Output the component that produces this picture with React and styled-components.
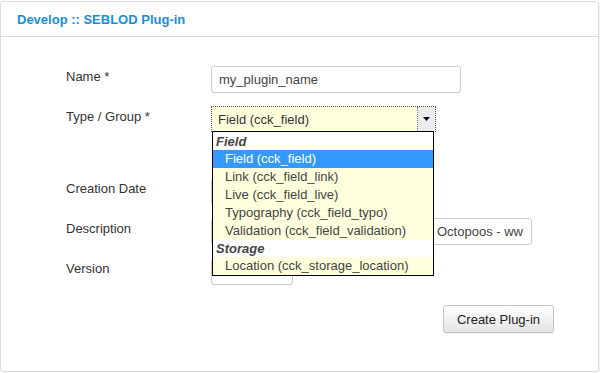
import React from 'react'
import styled, { createGlobalStyle } from 'styled-components'

const GlobalStyle = createGlobalStyle`
  html, body { margin: 0; padding: 0; background: #fff; }
  body { font-family: 'Liberation Sans', Arial, sans-serif; font-size: 13px; color: #333; }
`

const Panel = styled.div`
  margin: 1px 1px 0 0;
  width: 597px;
  height: 369px;
  border: 1px solid #dcdcdc;
  border-radius: 3px;
  box-shadow: 1px 1px 1px #f0f0f0;
  background: #fff;
  display: flex;
  flex-direction: column;
`

const Header = styled.div`
  height: 34px;
  border-bottom: 1px solid #dcdcdc;
  padding-left: 16px;
  display: flex;
  align-items: center;
  font-size: 13px;
  font-weight: bold;
  color: #1b8dd3;
`

const Form = styled.div`
  padding: 29px 0 0 65px;
  display: flex;
  flex-direction: column;
`

const Row = styled.div`
  display: grid;
  grid-template-columns: 145px auto;
  height: ${p => (p.$tall ? 72 : 40)}px;
  align-items: start;
`

const Label = styled.div`
  height: 26px;
  line-height: 22px;
  font-size: 13px;
  color: #333;
`

const Control = styled.div`
  position: relative;
`

const Input = styled.div`
  box-sizing: border-box;
  width: ${p => p.$w}px;
  height: 27px;
  border: 1px solid #ccc;
  border-radius: 3px;
  padding-left: ${p => p.$indent || 7}px;
  display: flex;
  align-items: center;
  white-space: nowrap;
  overflow: hidden;
  color: #444;
`

const Select = styled.div`
  box-sizing: border-box;
  width: 225px;
  height: 26px;
  border: 1px dotted #555;
  background: #ffffdd;
  display: flex;
  align-items: center;
`

const SelectValue = styled.div`
  flex: 1;
  padding-left: 6px;
  color: #333;
`

const SelectArrow = styled.div`
  width: 17px;
  height: 24px;
  border-left: 1px dotted #777;
  background: #ececec;
  display: flex;
  align-items: center;
  justify-content: center;
`

const Listbox = styled.div`
  position: absolute;
  top: 25px;
  left: 1px;
  width: 222px;
  box-sizing: border-box;
  border: 1px solid #000;
  background: #fff;
  z-index: 2;
  padding: 1px 0 0;
`

const Group = styled.div`
  height: 17px;
  line-height: 17px;
  padding-left: 3px;
  font-weight: bold;
  font-style: italic;
  color: #444;
  background: #fff;
`

const Option = styled.div`
  height: 18px;
  line-height: 18px;
  padding-left: 12px;
  white-space: nowrap;
  background: ${p => (p.$active ? '#3399ff' : '#ffffdd')};
  color: ${p => (p.$active ? '#fff' : '#444')};
`

const Footer = styled.div`
  display: flex;
  justify-content: flex-end;
  padding: 7px 44px 0 0;
`

const Button = styled.div`
  box-sizing: border-box;
  width: 111px;
  height: 28px;
  border: 1px solid #c4c4c4;
  border-radius: 3px;
  background: linear-gradient(#ffffff, #e4e4e4);
  box-shadow: 0 1px 1px #eee;
  display: flex;
  align-items: center;
  justify-content: center;
  color: #222;
  font-size: 13px;
`

const groups = [
  {
    name: 'Field',
    items: [
      'Field (cck_field)',
      'Link (cck_field_link)',
      'Live (cck_field_live)',
      'Typography (cck_field_typo)',
      'Validation (cck_field_validation)',
    ],
  },
  { name: 'Storage', items: ['Location (cck_storage_location)'] },
]

export default function App() {
  return (
    <>
      <GlobalStyle />
      <Panel>
        <Header>Develop :: SEBLOD Plug-in</Header>
        <Form>
          <Row>
            <Label>Name *</Label>
            <Input $w={250}>my_plugin_name</Input>
          </Row>
          <Row $tall>
            <Label>Type / Group *</Label>
            <Control>
              <Select>
                <SelectValue>Field (cck_field)</SelectValue>
                <SelectArrow>
                  <svg width="7" height="4" viewBox="0 0 7 4">
                    <path d="M0 0h7L3.5 4z" fill="#000" />
                  </svg>
                </SelectArrow>
              </Select>
              <Listbox>
                {groups.map(g => (
                  <React.Fragment key={g.name}>
                    <Group>{g.name}</Group>
                    {g.items.map((it, i) => (
                      <Option key={it} $active={g.name === 'Field' && i === 0}>
                        {it}
                      </Option>
                    ))}
                  </React.Fragment>
                ))}
              </Listbox>
            </Control>
          </Row>
          <Row>
            <Label>Creation Date</Label>
            <Input $w={120}></Input>
          </Row>
          <Row>
            <Label>Description</Label>
            <Input $w={321} $indent={225}>Octopoos - ww</Input>
          </Row>
          <Row>
            <Label>Version</Label>
            <Input $w={82}></Input>
          </Row>
        </Form>
        <Footer>
          <Button>Create Plug-in</Button>
        </Footer>
      </Panel>
    </>
  )
}
